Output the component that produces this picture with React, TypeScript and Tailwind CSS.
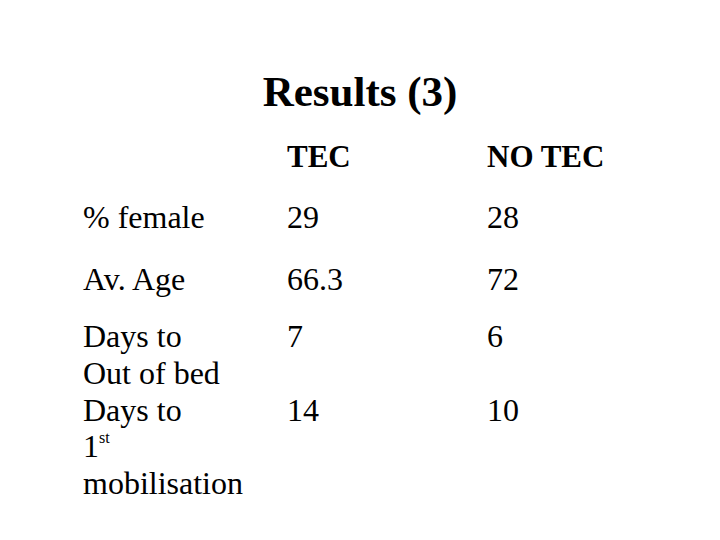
import React from 'react';

const rows = [
  { label: ['% female'], tec: '29', noTec: '28', mt: 'mt-[24px]' },
  { label: ['Av. Age'], tec: '66.3', noTec: '72', mt: 'mt-[25px]' },
  { label: ['Days to', 'Out of bed'], tec: '7', noTec: '6', mt: 'mt-[20px]' },
];

export default function App() {
  return (
    <div className="w-[720px] h-[540px] bg-white text-black font-['Liberation_Serif'] pt-[70px]">
      <h1 className="text-center text-[43px] leading-[44px] font-bold">Results (3)</h1>

      <div className="pl-[83px] mt-[25px]">
        {/* header */}
        <div className="grid grid-cols-[204px_200px_1fr] text-[31px] leading-[36px] font-bold">
          <div></div>
          <div>TEC</div>
          <div>NO TEC</div>
        </div>

        {rows.map((r, i) => (
          <div key={i} className={`grid grid-cols-[204px_200px_1fr] text-[32px] leading-[37px] ${r.mt}`}>
            <div>
              {r.label.map((l) => (
                <div key={l}>{l}</div>
              ))}
            </div>
            <div>{r.tec}</div>
            <div>{r.noTec}</div>
          </div>
        ))}

        <div className="grid grid-cols-[204px_200px_1fr] text-[32px] leading-[37px]">
          <div>
            <div>Days to</div>
            <div className="leading-[35px]">
              1<span className="relative -top-[14px] text-[16px] leading-none">st</span>
            </div>
            <div className="mt-[1px]">mobilisation</div>
          </div>
          <div>14</div>
          <div>10</div>
        </div>
      </div>
    </div>
  );
}
